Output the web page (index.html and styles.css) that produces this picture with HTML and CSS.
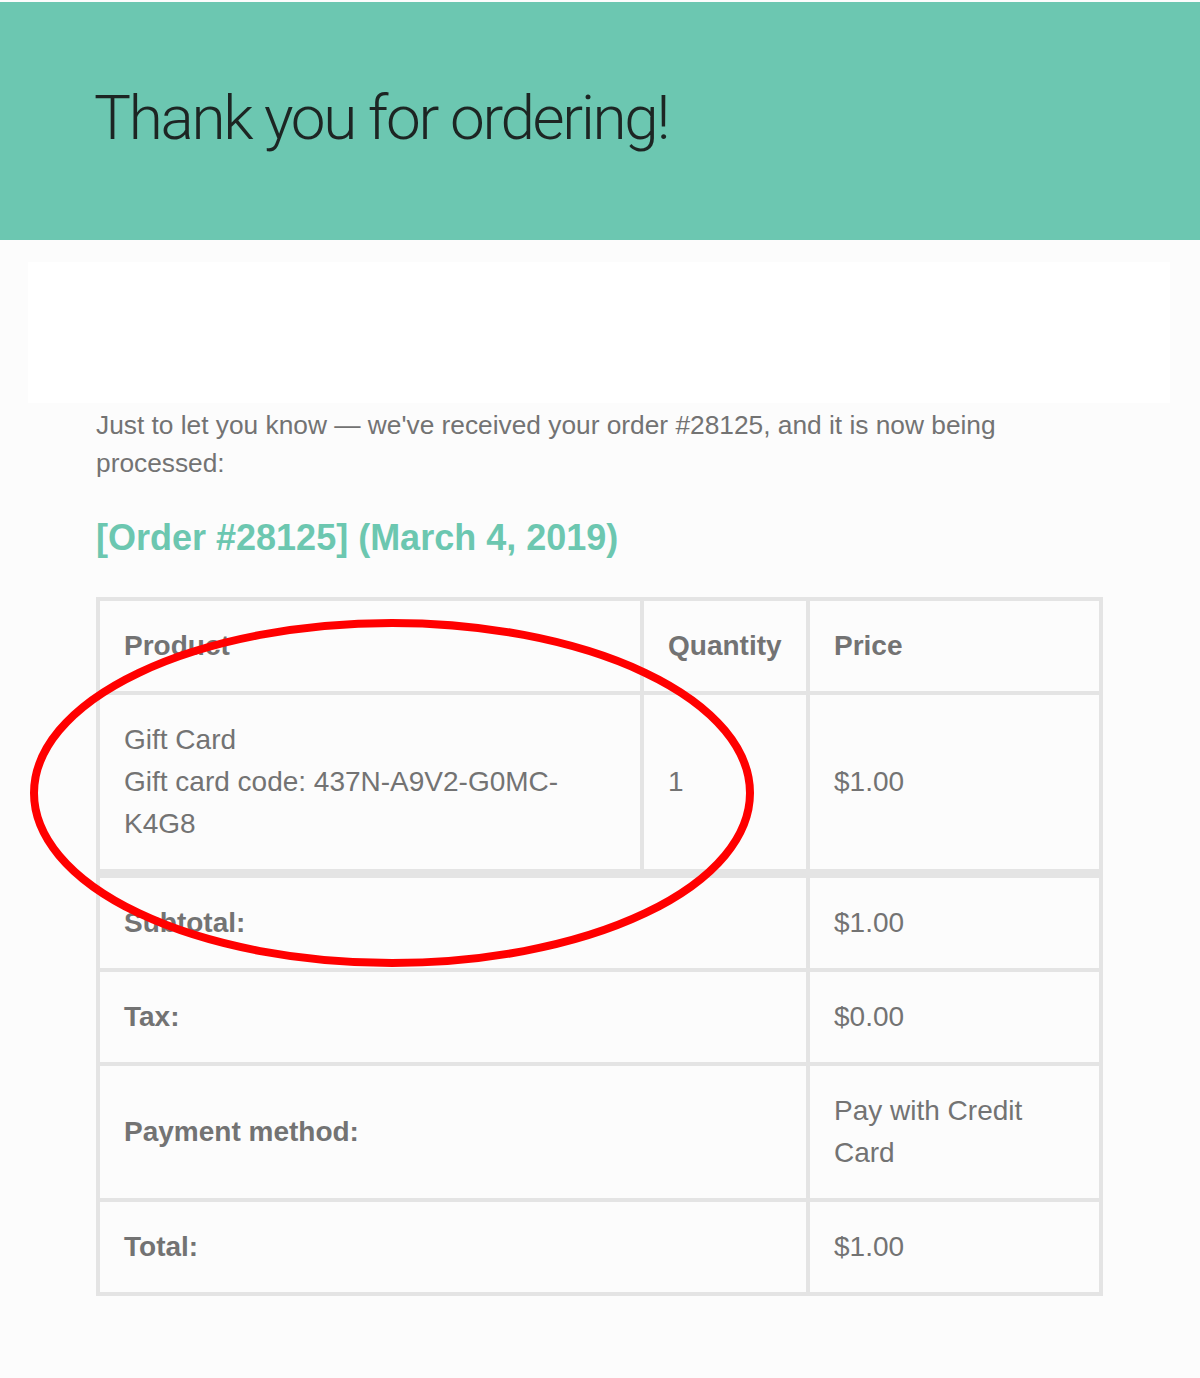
FILE: index.html
```html
<!DOCTYPE html>
<html lang="en">
<head>
<meta charset="utf-8">
<title>Thank you for ordering!</title>
<link rel="stylesheet" href="styles.css">
</head>
<body>
<div class="page">
  <header class="hero">
    <h1 class="hero-title">Thank you for ordering!</h1>
  </header>
  <div class="blank-card"></div>
  <main class="content">
    <p class="intro">Just to let you know — we've received your order #28125, and it is now being processed:</p>
    <h2 class="order-title">[Order #28125] (March 4, 2019)</h2>
    <table class="order-table">
      <thead>
        <tr>
          <th class="col-product">Product</th>
          <th class="col-qty">Quantity</th>
          <th class="col-price">Price</th>
        </tr>
      </thead>
      <tbody>
        <tr>
          <td>Gift Card<br>Gift card code: 437N-A9V2-G0MC-K4G8</td>
          <td>1</td>
          <td>$1.00</td>
        </tr>
      </tbody>
      <tfoot>
        <tr class="first">
          <th colspan="2">Subtotal:</th>
          <td>$1.00</td>
        </tr>
        <tr>
          <th colspan="2">Tax:</th>
          <td>$0.00</td>
        </tr>
        <tr>
          <th colspan="2">Payment method:</th>
          <td>Pay with Credit Card</td>
        </tr>
        <tr>
          <th colspan="2">Total:</th>
          <td>$1.00</td>
        </tr>
      </tfoot>
    </table>
  </main>
  <svg class="annotation" width="740" height="360" viewBox="0 0 740 360" aria-hidden="true">
    <ellipse cx="362" cy="175" rx="358" ry="170" fill="none" stroke="#ff0000" stroke-width="8"/>
  </svg>
</div>
</body>
</html>
```

FILE: styles.css
```css
html, body {
  margin: 0;
  padding: 0;
}

body {
  background: #fcfcfc;
  font-family: "Liberation Sans", Arial, Helvetica, sans-serif;
  color: #737373;
}

.page {
  position: relative;
  width: 1200px;
  min-height: 1378px;
  padding-top: 2px;
  box-sizing: border-box;
  background: #fcfcfc;
}

.hero {
  background: #6cc7b1;
  height: 238px;
  box-sizing: border-box;
  padding: 79px 0 0 94px;
}

.hero-title {
  margin: 0;
  font-family: Roboto, "Liberation Sans", sans-serif;
  font-weight: 300;
  font-size: 62px;
  line-height: 74px;
  letter-spacing: -2.3px;
  color: #1d2523;
}

.blank-card {
  margin: 22px 30px 0 28px;
  height: 141px;
  background: #ffffff;
}

.content {
  padding: 3px 97px 0 96px;
}

.intro {
  margin: 0;
  font-size: 26.3px;
  line-height: 38px;
  color: #737373;
}

.order-title {
  margin: 35px 0 38px;
  font-size: 36px;
  line-height: 42px;
  font-weight: 700;
  color: #6cc7b0;
}

.order-table {
  width: 1007px;
  border-collapse: collapse;
  border: 4px solid #e4e4e4;
  font-size: 28px;
  line-height: 42px;
  color: #737373;
}

.order-table th,
.order-table td {
  border: 4px solid #e4e4e4;
  padding: 24px 24px;
  text-align: left;
  vertical-align: middle;
}

.order-table th {
  font-weight: 700;
}

.col-product { width: 492px; }
.col-qty { width: 114px; }
.col-price { width: auto; }

.order-table tfoot tr.first th,
.order-table tfoot tr.first td {
  border-top: 9px solid #e4e4e4;
}

.annotation {
  position: absolute;
  left: 30px;
  top: 618px;
  overflow: visible;
}
```
